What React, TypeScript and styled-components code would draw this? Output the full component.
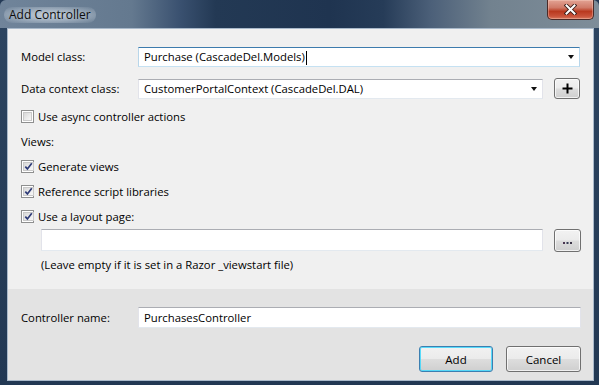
import React from 'react';
import styled, { createGlobalStyle } from 'styled-components';

const GlobalStyle = createGlobalStyle`
  html, body { margin: 0; padding: 0; background: #243a56; }
  * { box-sizing: border-box; }
`;

const UI_FONT = `"Open Sans", "Noto Sans", "Liberation Sans", sans-serif`;

// --- window chrome ---
const Window = styled.div`
  width: 599px;
  height: 385px;
  display: flex;
  flex-direction: column;
  background: linear-gradient(to bottom, #2d4561 0%, #223853 100%);
  border-radius: 6px 6px 0 0;
  overflow: hidden;
  font-family: ${UI_FONT};
  font-size: 11.3px;
  color: #000;
`;

const TitleBar = styled.div`
  height: 28px;
  display: flex;
  align-items: flex-start;
  background: linear-gradient(
    to right,
    #70849a 0%,
    #64798f 22%,
    #3a5170 30%,
    #233954 36%,
    #1f3450 55%,
    #263c58 64%,
    #4c6079 72%,
    #72828f 82%,
    #7e8d99 100%
  );
`;

const TitleText = styled.div`
  margin: 7px 0 0 4px;
  padding: 0 5px;
  line-height: 16px;
  font-size: 12px;
  color: #0c0c0c;
  border-radius: 10px;
  background: radial-gradient(ellipse at center, rgba(214, 222, 230, 0.85) 0%, rgba(190, 202, 214, 0.55) 55%, rgba(150, 168, 186, 0) 100%);
`;

const CloseButton = styled.div`
  margin-left: auto;
  margin-right: 5px;
  width: 47px;
  height: 20px;
  display: flex;
  align-items: center;
  justify-content: center;
  border: 1px solid #4b2a27;
  border-top: none;
  border-radius: 0 0 5px 5px;
  background: linear-gradient(to bottom, #e3a394 0%, #d07a68 40%, #b9391f 60%, #c8523a 85%, #d8785c 100%);
  box-shadow: inset 0 0 0 1px rgba(255, 220, 210, 0.35);
`;

const Frame = styled.div`
  flex: 1;
  display: flex;
  padding: 0 5px 4px 7px;
`;

const Client = styled.div`
  flex: 1;
  display: flex;
  flex-direction: column;
  border: 1px solid #a9b9ca;
`;

const Upper = styled.div`
  height: 260px;
  flex: none;
  background: #f0f0f0;
  padding: 18px 13px 0 13px;
  display: flex;
  flex-direction: column;
`;

const Lower = styled.div`
  flex: 1;
  background: #e3e3e3;
  padding: 18px 12px 0 13px;
  display: flex;
  flex-direction: column;
`;

// --- form rows ---
const FieldRow = styled.div<{ $top?: number; $withButton?: boolean }>`
  display: grid;
  grid-template-columns: ${p => (p.$withButton ? '106px 1fr 26px' : '106px 1fr')};
  column-gap: 11px;
  align-items: center;
  margin-top: ${p => p.$top ?? 0}px;
`;

const Label = styled.span`
  line-height: 16px;
  white-space: nowrap;
`;

const Field = styled.div<{ $focused?: boolean; $height?: number }>`
  height: ${p => p.$height ?? 20}px;
  display: flex;
  align-items: center;
  padding: 0 4px 0 5px;
  background: #fff;
  border: 1px solid ${p => (p.$focused ? '#b8d6ea' : '#e2e3ea')};
  border-top-color: ${p => (p.$focused ? '#3d7bad' : '#abadb3')};
  border-bottom-color: ${p => (p.$focused ? '#c5e1f2' : '#e3e9ef')};
  white-space: nowrap;
  overflow: hidden;
`;

const FieldText = styled.span`
  flex: 1;
  line-height: 16px;
`;

const Caret = styled.span`
  display: inline-block;
  width: 1px;
  height: 14px;
  margin-left: 1px;
  vertical-align: middle;
  background: #000;
`;

const DropArrow = styled.span`
  width: 0;
  height: 0;
  border-left: 3.5px solid transparent;
  border-right: 3.5px solid transparent;
  border-top: 4px solid #111;
  margin-right: 1px;
`;

const CheckList = styled.div`
  margin-top: 5px;
`;

const CheckRow = styled.div`
  height: 25px;
  display: flex;
  align-items: center;
  gap: 4px;
`;

const Box = styled.span`
  width: 13px;
  height: 13px;
  flex: none;
  border: 1px solid #8e8f8f;
  background: #fff;
  padding: 1px;
  display: flex;
`;

const BoxInner = styled.span`
  flex: 1;
  display: flex;
  align-items: center;
  justify-content: center;
  background: linear-gradient(135deg, #d8d8d8 0%, #ececec 60%, #f7f7f7 100%);
  border: 1px solid #c9c9c9;
`;

const PathRow = styled.div`
  display: grid;
  grid-template-columns: 1fr 27px;
  column-gap: 11px;
  margin-left: 20px;
  margin-right: -1px;
  align-items: start;
`;

const Note = styled.div`
  margin: 5px 0 0 20px;
  line-height: 16px;
`;

// --- buttons ---
const ToolButton = styled.div<{ $height: number }>`
  height: ${p => p.$height}px;
  display: flex;
  align-items: center;
  justify-content: center;
  border: 1px solid #707070;
  border-radius: 3px;
  background: linear-gradient(to bottom, #f2f2f2 0%, #ebebeb 48%, #dddddd 52%, #cfcfcf 100%);
  box-shadow: inset 0 0 0 1px rgba(255, 255, 255, 0.7);
`;

const ButtonBar = styled.div`
  margin-top: 18px;
  display: flex;
  justify-content: flex-end;
  gap: 13px;
`;

const DialogButton = styled.div<{ $default?: boolean; $width: number }>`
  width: ${p => p.$width}px;
  height: 26px;
  display: flex;
  align-items: center;
  justify-content: center;
  font-size: 11.5px;
  border: 1px solid ${p => (p.$default ? '#3c7fb1' : '#707070')};
  border-radius: 3px;
  background: linear-gradient(to bottom, #f2f2f2 0%, #ebebeb 48%, #dddddd 52%, #cfcfcf 100%);
  box-shadow: inset 0 0 0 1px ${p => (p.$default ? 'rgba(72, 216, 251, 0.9)' : 'rgba(255, 255, 255, 0.7)')};
`;

// --- drawings ---
const CloseGlyph = () => (
  <svg width="13" height="11" viewBox="0 0 13 11">
    <path d="M2.5 1.5 L10.5 9.5 M10.5 1.5 L2.5 9.5" stroke="#3b1d18" strokeWidth="3.8" strokeLinecap="square" />
    <path d="M2.5 1.5 L10.5 9.5 M10.5 1.5 L2.5 9.5" stroke="#ffffff" strokeWidth="2" strokeLinecap="square" />
  </svg>
);

const Checkbox = ({ checked }: { checked?: boolean }) => (
  <Box>
    <BoxInner>
      {checked && (
        <svg width="9" height="9" viewBox="0 0 9 9">
          <path d="M1.3 4.6 L3.4 6.9 L7.8 1.2" fill="none" stroke="#2f3c78" strokeWidth="1.7" />
        </svg>
      )}
    </BoxInner>
  </Box>
);

const PlusGlyph = () => (
  <svg width="11" height="11" viewBox="0 0 11 11">
    <path d="M5.5 0.5 V10.5 M0.5 5.5 H10.5" stroke="#000" strokeWidth="2" />
  </svg>
);

const DotsGlyph = () => (
  <svg width="9" height="4" viewBox="0 0 9 4" style={{ marginTop: 4 }}>
    <rect x="0" y="1" width="2" height="2" fill="#4a3550" />
    <rect x="3.5" y="1" width="2" height="2" fill="#353b55" />
    <rect x="7" y="1" width="2" height="2" fill="#3a3346" />
  </svg>
);

const App = () => (
  <>
    <GlobalStyle />
    <Window>
      <TitleBar>
        <TitleText>Add Controller</TitleText>
        <CloseButton>
          <CloseGlyph />
        </CloseButton>
      </TitleBar>
      <Frame>
        <Client>
          <Upper>
            <FieldRow>
              <Label>Model class:</Label>
              <Field $focused>
                <FieldText>
                  Purchase (CascadeDel.Models)
                  <Caret />
                </FieldText>
                <DropArrow />
              </Field>
            </FieldRow>
            <FieldRow $top={11} $withButton>
              <Label>Data context class:</Label>
              <Field>
                <FieldText>CustomerPortalContext (CascadeDel.DAL)</FieldText>
                <DropArrow />
              </Field>
              <ToolButton $height={21}>
                <PlusGlyph />
              </ToolButton>
            </FieldRow>
            <CheckList>
              <CheckRow>
                <Checkbox />
                <Label>Use async controller actions</Label>
              </CheckRow>
              <CheckRow>
                <Label>Views:</Label>
              </CheckRow>
              <CheckRow>
                <Checkbox checked />
                <Label>Generate views</Label>
              </CheckRow>
              <CheckRow>
                <Checkbox checked />
                <Label>Reference script libraries</Label>
              </CheckRow>
              <CheckRow>
                <Checkbox checked />
                <Label>Use a layout page:</Label>
              </CheckRow>
            </CheckList>
            <PathRow>
              <Field $height={22} />
              <ToolButton $height={23}>
                <DotsGlyph />
              </ToolButton>
            </PathRow>
            <Note>(Leave empty if it is set in a Razor _viewstart file)</Note>
          </Upper>
          <Lower>
            <FieldRow>
              <Label>Controller name:</Label>
              <Field $height={21}>
                <FieldText>PurchasesController</FieldText>
              </Field>
            </FieldRow>
            <ButtonBar>
              <DialogButton $default $width={74}>Add</DialogButton>
              <DialogButton $width={75}>Cancel</DialogButton>
            </ButtonBar>
          </Lower>
        </Client>
      </Frame>
    </Window>
  </>
);

export default App;
